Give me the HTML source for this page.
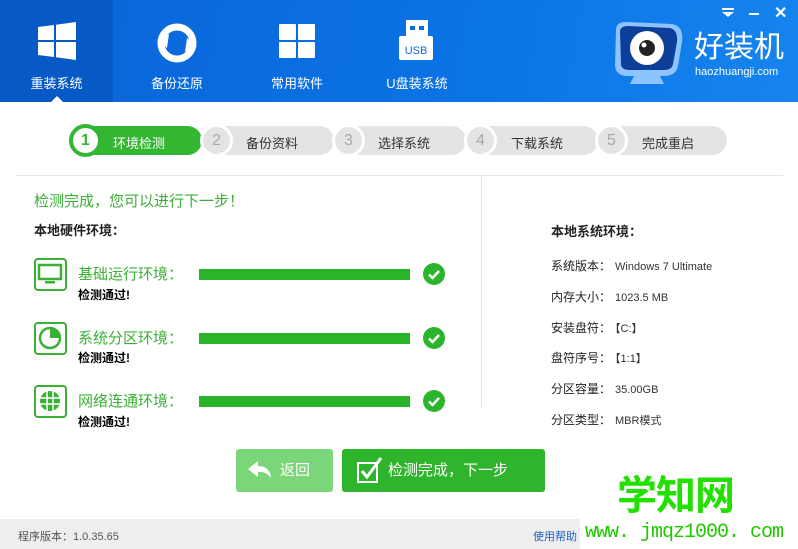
<!DOCTYPE html>
<html><head><meta charset="utf-8"><style>
*{margin:0;padding:0;box-sizing:border-box}
body{width:798px;height:549px;overflow:hidden;background:#fff;font-family:"Liberation Sans","Noto Sans CJK SC",sans-serif;position:relative;font-size:12px;color:#222}
div{white-space:nowrap}
.hdr{position:absolute;left:0;top:0;width:798px;height:102px;background:linear-gradient(100deg,#0a63d6,#0b74e6 60%,#1684ee)}
.tab{position:absolute;top:0;height:102px;width:114px;color:#fff;text-align:center;font-size:13px}
.tab .lbl{position:absolute;top:73px;left:0;width:100%}
.tab svg{position:absolute;left:50%;transform:translateX(-50%);top:22px}
.sel{background:#0759c6}
.abs{position:absolute}
.step{position:absolute;top:126px;height:29px;background:#e4e4e4;border-radius:0 15px 15px 0}
.num{position:absolute;top:124px;width:33px;height:33px;border-radius:50%;background:#e4e4e4;border:3px solid #fff;color:#aaa;font-size:16px;text-align:center;line-height:27px}
.st{position:absolute;top:133px;font-size:13px;color:#333}
.row{position:absolute;left:34px;width:420px;height:45px}
.ic{position:absolute;left:0;width:33px;height:33px;border:2.5px solid #3ab035;border-radius:4px}
.rt{position:absolute;left:44px;font-size:15px;color:#3ab035;white-space:nowrap}
.ok{position:absolute;left:44px;font-size:12px;color:#000;font-weight:bold}
.bar{position:absolute;left:165px;width:211px;height:11px;background:#28b528}
.chk{position:absolute;left:389px;width:22px;height:22px;border-radius:50%;background:#2cb52c}
.info{position:absolute;left:551px;font-size:12px;color:#222}
.info span{font-size:11px;color:#333;margin-left:4px}
</style></head><body>
<div class="hdr"></div>
<div class="tab sel" style="left:0;width:113px">
<svg width="38" height="38" viewBox="0 0 38 38"><path d="M0 5 L16 3 V18 H0Z M18 2.7 L38 0 V18 H18Z M0 20 H16 V35 L0 33Z M18 20 H38 V38 L18 35.3Z" fill="#fff"/></svg>
<div class="lbl">重装系统</div>
<div class="abs" style="left:50px;top:96px;width:0;height:0;border-left:7px solid transparent;border-right:7px solid transparent;border-bottom:7px solid #fff"></div>
</div>
<div class="tab" style="left:120px">
<svg width="44" height="42" viewBox="0 0 44 42"><circle cx="22" cy="21" r="16" fill="none" stroke="#fff" stroke-width="7"/><path d="M2 18 L12 26 L14 12Z M42 24 L32 16 L30 30Z" fill="#fff"/></svg>
<div class="lbl">备份还原</div></div>
<div class="tab" style="left:240px">
<svg width="36" height="36" viewBox="0 0 36 36"><rect x="0" y="2" width="17" height="16" rx="1" fill="#fff"/><rect x="19" y="2" width="17" height="16" rx="1" fill="#fff"/><rect x="0" y="20" width="17" height="16" rx="1" fill="#fff"/><rect x="19" y="20" width="17" height="16" rx="1" fill="#fff"/></svg>
<div class="lbl">常用软件</div></div>
<div class="tab" style="left:360px">
<svg width="36" height="42" viewBox="0 0 36 42" style="top:20px"><rect x="7" y="0" width="22" height="16" fill="#fff"/><rect x="11" y="6" width="5" height="4" fill="#0a6ad9"/><rect x="20" y="6" width="5" height="4" fill="#0a6ad9"/><rect x="0" y="16" width="34" height="24" rx="2" fill="#fff"/><text x="17" y="34" font-size="11" fill="#0a6ad9" text-anchor="middle" font-family="Liberation Sans">USB</text></svg>
<div class="lbl">U盘装系统</div></div>
<svg class="abs" style="left:610px;top:20px" width="78" height="66" viewBox="0 0 78 66"><path d="M6 10 Q6 2 16 2 L62 4 Q74 6 72 22 L68 46 Q66 56 54 56 L18 56 Q6 56 5 46Z" fill="#8cc4ff"/><path d="M10 12 Q10 6 18 6 L60 8 Q68 10 67 22 L63 44 Q62 50 54 50 L20 50 Q11 50 11 44Z" fill="#0d3f9a"/><circle cx="37" cy="28" r="17" fill="#fff"/><circle cx="37" cy="28" r="8" fill="#222"/><circle cx="34" cy="25" r="2.5" fill="#fff"/><path d="M24 56 H50 L54 64 H20Z" fill="#8cc4ff"/></svg>
<div class="abs" style="left:694px;top:33px;font-size:30px;line-height:30px;color:#fff">好装机</div>
<div class="abs" style="left:695px;top:66px;font-size:11px;line-height:12px;color:#fff">haozhuangji.com</div>
<div class="abs" style="left:722px;top:8px;width:12px;height:2px;background:#fff"></div>
<div class="abs" style="left:722px;top:12px;width:0;height:0;border-left:6px solid transparent;border-right:6px solid transparent;border-top:5px solid #fff"></div>
<div class="abs" style="left:749px;top:13px;width:10px;height:2px;background:#fff"></div>
<div class="abs" style="left:774px;top:3px;font-size:16px;color:#fff;font-weight:bold">✕</div>

<div class="step" style="left:84px;width:118px;background:#33b632"></div>
<div class="step" style="left:216px;width:118px"></div>
<div class="step" style="left:348px;width:118px"></div>
<div class="step" style="left:480px;width:118px"></div>
<div class="step" style="left:611px;width:116px"></div>
<div class="num" style="left:69px;background:#fff;border:4px solid #33b632;color:#33b632;line-height:25px;font-weight:bold">1</div>
<div class="num" style="left:200px">2</div>
<div class="num" style="left:332px">3</div>
<div class="num" style="left:464px">4</div>
<div class="num" style="left:595px">5</div>
<div class="st" style="left:113px;color:#fff">环境检测</div>
<div class="st" style="left:246px">备份资料</div>
<div class="st" style="left:378px">选择系统</div>
<div class="st" style="left:511px">下载系统</div>
<div class="st" style="left:642px">完成重启</div>

<div class="abs" style="left:15px;top:175px;width:768px;height:1px;background:#e6e6e6"></div>
<div class="abs" style="left:481px;top:175px;width:1px;height:232px;background:#e6e6e6"></div>

<div class="abs" style="left:34px;top:190px;font-size:15px;color:#3ab035">检测完成，您可以进行下一步！</div>
<div class="abs" style="left:34px;top:220px;font-size:13px;font-weight:bold;color:#222">本地硬件环境：</div>

<div class="row" style="top:258px">
<div class="ic"><svg width="28" height="28" viewBox="0 0 28 28"><rect x="3" y="5" width="22" height="14" fill="none" stroke="#3ab035" stroke-width="2.5"/><rect x="9" y="21" width="10" height="2.5" fill="#3ab035"/></svg></div>
<div class="rt" style="top:5px">基础运行环境：</div><div class="ok" style="top:28px">检测通过!</div>
<div class="bar" style="top:11px"></div><div class="chk" style="top:5px"><svg width="22" height="22"><path d="M6 11.5 L9.5 15 L16 8" stroke="#fff" stroke-width="2.5" fill="none"/></svg></div></div>

<div class="row" style="top:322px">
<div class="ic"><svg width="28" height="28" viewBox="0 0 28 28"><circle cx="14" cy="14" r="10" fill="none" stroke="#3ab035" stroke-width="2.5"/><path d="M14 14 V5 A9 9 0 0 1 23 14Z" fill="#3ab035"/></svg></div>
<div class="rt" style="top:5px">系统分区环境：</div><div class="ok" style="top:27px">检测通过!</div>
<div class="bar" style="top:11px"></div><div class="chk" style="top:5px"><svg width="22" height="22"><path d="M6 11.5 L9.5 15 L16 8" stroke="#fff" stroke-width="2.5" fill="none"/></svg></div></div>

<div class="row" style="top:385px">
<div class="ic"><svg width="28" height="28" viewBox="0 0 28 28"><circle cx="14" cy="14" r="10" fill="#3ab035"/><path d="M4 11 H24 M4 17 H24 M11 4 V24 M17 4 V24" stroke="#fff" stroke-width="1.5"/></svg></div>
<div class="rt" style="top:5px">网络连通环境：</div><div class="ok" style="top:28px">检测通过!</div>
<div class="bar" style="top:11px"></div><div class="chk" style="top:5px"><svg width="22" height="22"><path d="M6 11.5 L9.5 15 L16 8" stroke="#fff" stroke-width="2.5" fill="none"/></svg></div></div>

<div class="info" style="top:221px;font-size:13px;font-weight:bold">本地系统环境：</div>
<div class="info" style="top:257px">系统版本：<span>Windows 7 Ultimate</span></div>
<div class="info" style="top:288px">内存大小：<span>1023.5 MB</span></div>
<div class="info" style="top:319px">安装盘符：<span>【C:】</span></div>
<div class="info" style="top:349px">盘符序号：<span>【1:1】</span></div>
<div class="info" style="top:380px">分区容量：<span>35.00GB</span></div>
<div class="info" style="top:411px">分区类型：<span>MBR模式</span></div>

<div class="abs" style="left:236px;top:449px;width:97px;height:43px;background:#7bd67a;border-radius:3px;color:#fff;font-size:15px;line-height:43px;padding-left:44px">返回</div>
<svg class="abs" style="left:248px;top:460px" width="24" height="20"><path d="M0 9 L10 1 V6 Q22 6 23 18 Q18 11 10 12 V17Z" fill="#fff"/></svg>
<div class="abs" style="left:342px;top:449px;width:203px;height:43px;background:#2fb52c;border-radius:3px;color:#fff;font-size:15px;line-height:43px;padding-left:46px">检测完成，下一步</div>
<svg class="abs" style="left:356px;top:456px" width="28" height="28"><rect x="2" y="7" width="19" height="19" fill="none" stroke="#fff" stroke-width="2"/><path d="M6 15 L11 21 L25 2" stroke="#fff" stroke-width="3" fill="none"/></svg>

<div class="abs" style="left:0;top:519px;width:798px;height:30px;background:#eeeeee"></div>
<div class="abs" style="left:18px;top:528px;font-size:11px;color:#555">程序版本：1.0.35.65</div>
<div class="abs" style="left:533px;top:528px;font-size:11px;color:#1a5fc8">使用帮助</div>
<div class="abs" style="left:617px;top:474px;font-size:40px;line-height:44px;font-weight:bold;color:#22e000;letter-spacing:-1px">学知网</div>
<div class="abs" style="left:580px;top:519px;width:218px;height:30px;background:#fff"></div>
<div class="abs" style="left:585px;top:520px;font-size:20px;line-height:26px;letter-spacing:-1px;color:#22c800;font-family:'Liberation Mono',monospace">www. jmqz1000. com</div>
</body></html>
